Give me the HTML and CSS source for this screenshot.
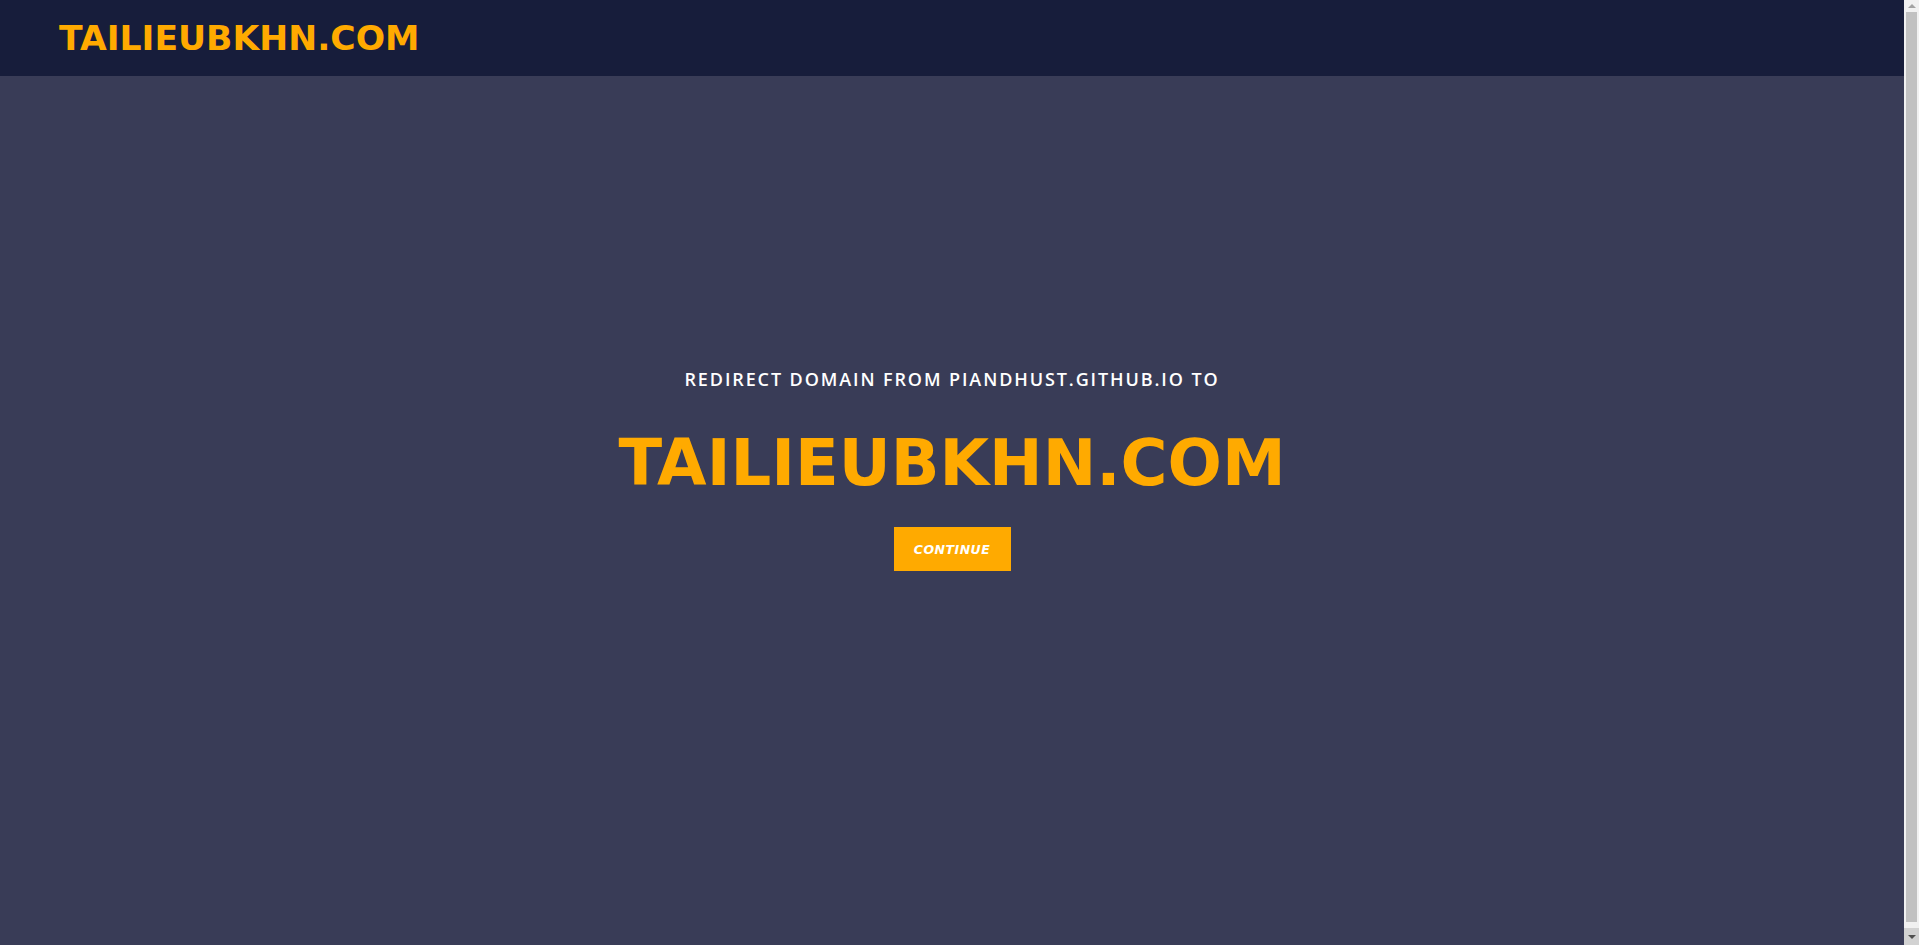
FILE: index.html
```html
<!DOCTYPE html>
<html lang="en">
<head>
<meta charset="utf-8">
<title>TAILIEUBKHN.COM</title>
<link rel="stylesheet" href="styles.css">
</head>
<body>
<header class="topbar">
  <a class="brand" href="#">TAILIEUBKHN.COM</a>
</header>
<main class="hero">
  <div class="hero-inner">
    <p class="subtitle">REDIRECT DOMAIN FROM PIANDHUST.GITHUB.IO TO</p>
    <h1 class="title">TAILIEUBKHN.COM</h1>
    <a class="btn" href="#">CONTINUE</a>
  </div>
</main>
<div class="scrollbar" aria-hidden="true">
  <div class="sb-up"><span class="tri-up"></span></div>
  <div class="sb-track"><div class="sb-thumb"></div></div>
  <div class="sb-down"><span class="tri-down"></span></div>
</div>
</body>
</html>
```
FILE: styles.css
```css
html, body {
  margin: 0;
  padding: 0;
}
body {
  background: #393c57;
  font-family: "DejaVu Sans", "Liberation Sans", sans-serif;
  margin-right: 15px;
}
.topbar {
  height: 76px;
  background: #171d3b;
  display: flex;
  align-items: center;
  padding-left: 59px;
}
.brand {
  color: #ffaa00;
  text-decoration: none;
  font-weight: 700;
  font-size: 34.6px;
  line-height: 1;
}
.hero {
  min-height: 879px;
  box-sizing: border-box;
  padding-bottom: 90px;
  display: flex;
  flex-direction: column;
  justify-content: center;
  align-items: center;
}
.hero-inner {
  display: flex;
  flex-direction: column;
  align-items: center;
}
.subtitle {
  margin: 0;
  color: #ffffff;
  font-family: "Open Sans", "DejaVu Sans", sans-serif;
  font-weight: 600;
  font-size: 18px;
  letter-spacing: 1.9px;
  line-height: 1;
}
.title {
  margin: 43px 0 32px;
  color: #ffaa00;
  font-weight: 700;
  font-size: 64px;
  line-height: 1;
}
.btn {
  display: flex;
  align-items: center;
  justify-content: center;
  width: 117px;
  height: 44px;
  background: #ffaa00;
  color: #ffffff;
  text-decoration: none;
  font-style: italic;
  font-weight: 700;
  font-size: 12.5px;
  letter-spacing: 0.5px;
}
.scrollbar {
  position: fixed;
  top: 0;
  right: 0;
  width: 15px;
  height: 100vh;
  background: #f1f1f1;
  display: flex;
  flex-direction: column;
}
.sb-up, .sb-down {
  height: 12px;
  display: flex;
  align-items: center;
  justify-content: center;
  flex: none;
}
.sb-down {
  height: 17px;
  background: #d2d2d2;
}
.sb-track {
  flex: 1;
  padding: 0 2px 6px;
  display: flex;
}
.sb-thumb {
  flex: 1;
  background: #c1c1c1;
}
.tri-up {
  width: 0;
  height: 0;
  border-left: 4px solid transparent;
  border-right: 4px solid transparent;
  border-bottom: 4px solid #a3a3a3;
}
.tri-down {
  width: 0;
  height: 0;
  border-left: 4px solid transparent;
  border-right: 4px solid transparent;
  border-top: 4px solid #505050;
}
```
